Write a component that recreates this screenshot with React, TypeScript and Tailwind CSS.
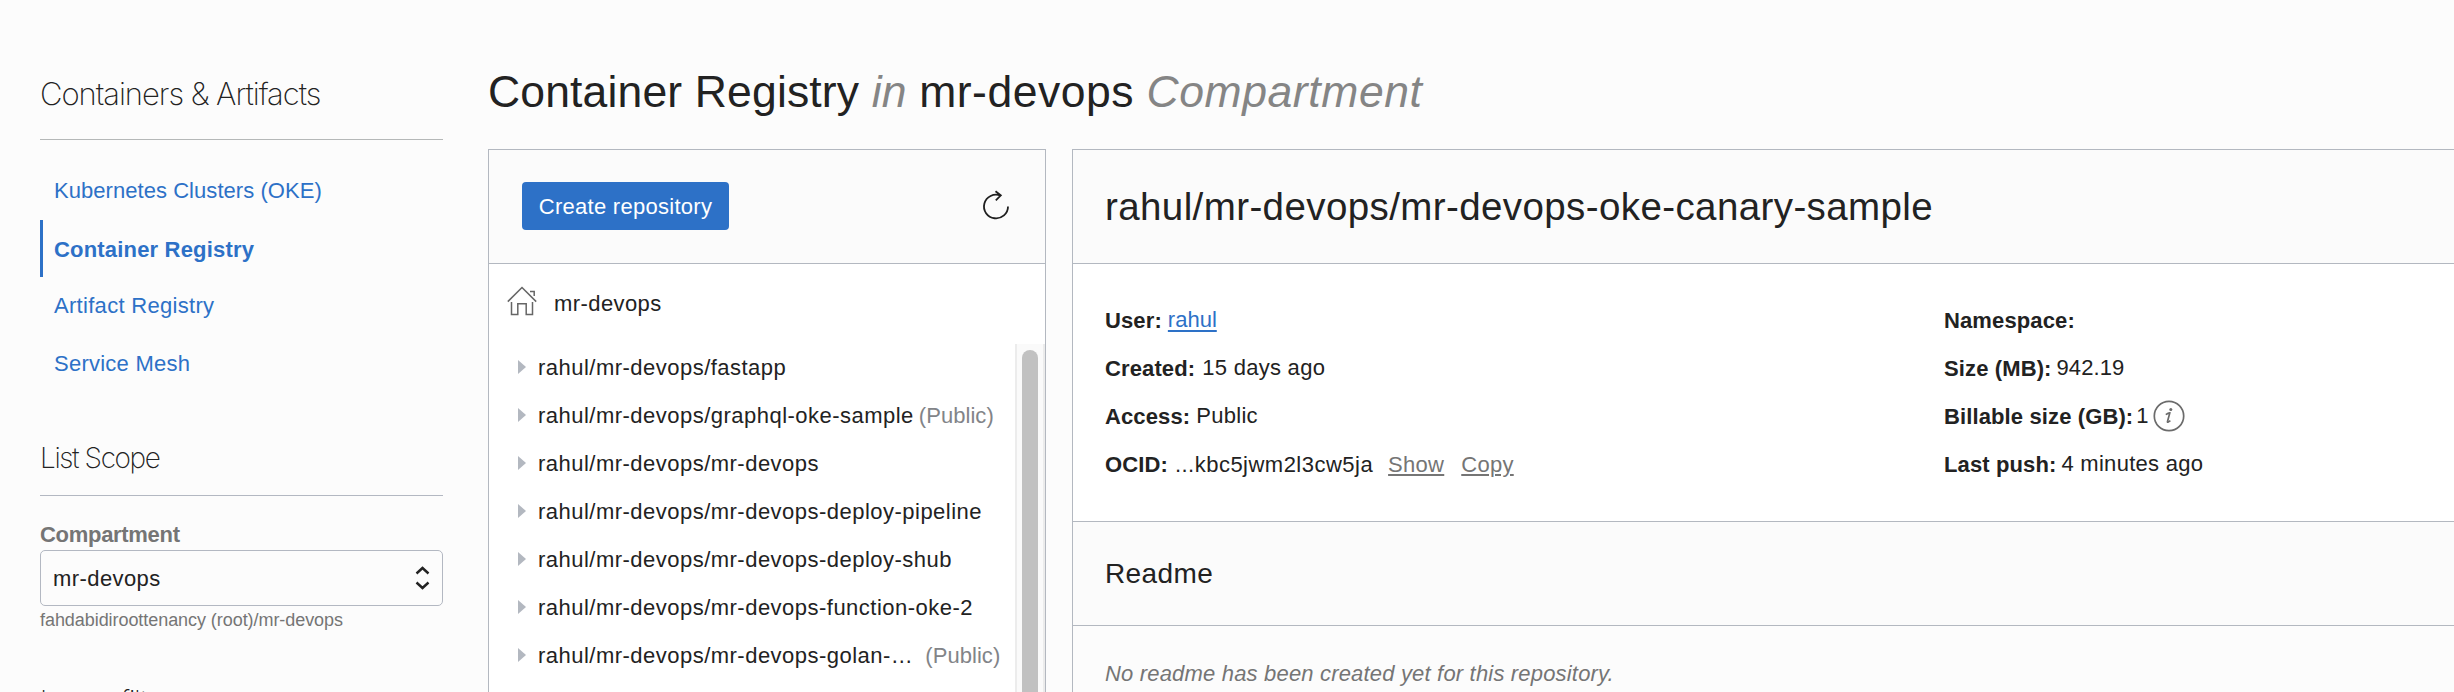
import React from "react";

const repos: { name: string; isPublic?: boolean; cut?: boolean }[] = [
  { name: "rahul/mr-devops/fastapp" },
  { name: "rahul/mr-devops/graphql-oke-sample", isPublic: true },
  { name: "rahul/mr-devops/mr-devops" },
  { name: "rahul/mr-devops/mr-devops-deploy-pipeline" },
  { name: "rahul/mr-devops/mr-devops-deploy-shub" },
  { name: "rahul/mr-devops/mr-devops-function-oke-2" },
  { name: "rahul/mr-devops/mr-devops-golan-…", isPublic: true, cut: true },
];

function Sidebar() {
  return (
    <aside className="ml-10 w-[403px] shrink-0">
      <h2 className="h-[140px] border-b border-[#b5b8b8] pt-[74px] font-['Inter'] text-[31px] leading-[40px] font-extralight tracking-[-1.03px]">
        Containers &amp; Artifacts
      </h2>
      <nav className="flex flex-col pt-[22px] text-[22px] text-[#2d71c7]">
        <a className="h-[58px] pl-[14px] leading-[58px] tracking-[0.05px]">Kubernetes Clusters (OKE)</a>
        <a className="h-[57px] border-l-[3px] border-[#2d71c7] pl-[11px] leading-[60px] font-bold tracking-[0.18px]">Container Registry</a>
        <a className="h-[57px] pl-[14px] leading-[57px] tracking-[0.3px]">Artifact Registry</a>
        <a className="h-[57px] pl-[14px] leading-[60px] tracking-[0.25px]">Service Mesh</a>
      </nav>
      <h3 className="h-[105px] border-b border-[#b3b8c2] pt-[47px] font-['Inter'] text-[28px] leading-[40px] font-extralight tracking-[-1.4px]">
        List Scope
      </h3>
      <div className="pt-[24px] text-[22px] leading-[30px] font-bold tracking-[-0.3px] text-[#757575]">Compartment</div>
      <div className="flex h-[56px] items-center justify-between rounded-[5px] border border-[#b3b8c2] pr-3 pl-[12px] text-[22px] tracking-[0.42px]">
        <span className="pt-px">mr-devops</span>
        <svg width="15" height="24" viewBox="0 0 15 24" fill="none" stroke="#222" strokeWidth="2.4">
          <path d="M1.5 7.500 7.500 2l6 5.500M1.500 16.500 7.500 22l6-5.500" />
        </svg>
      </div>
      <div className="pt-[2px] text-[18px] leading-6 tracking-[-0.06px] text-[#757575]">fahdabidiroottenancy (root)/mr-devops</div>
      <h3 className="mt-[49px] font-['Inter'] text-[28px] leading-[40px] font-extralight tracking-[-1px]">Image filters</h3>
    </aside>
  );
}

function RepoPanel() {
  return (
    <section className="flex w-[558px] shrink-0 flex-col border border-b-0 border-[#b3b8c0] bg-white">
      <div className="flex h-[114px] shrink-0 items-start justify-between border-b border-[#b3b8c0] bg-[#fbfbfb] pt-8 pr-[35px] pl-[33px]">
        <button className="h-12 w-[207px] rounded-[4px] bg-[#2d71c7] text-[22px] tracking-[0.27px] text-white">Create repository</button>
        <svg className="mt-[8px]" width="28" height="30" viewBox="0 0 28 30" fill="none" stroke="#1f1f1f" strokeWidth="1.8">
          <path d="M26 16.500A12 11.800 0 1 1 18.500 5.600M13.500 1.200l5.300 4.200-5 4.900" />
        </svg>
      </div>
      <div className="flex h-[79px] shrink-0 items-center pl-[18px] text-[22px] tracking-[0.42px]">
        <svg className="mb-[5px]" width="30" height="30" viewBox="0 0 30 30" fill="none" stroke="#666" strokeWidth="1.500">
          <path d="M.8 15.600 15 1.500l14.200 14.100M23 5.500h4.200V10M4.500 16v12.500h6.300V17.800h8.400v10.700h6.300V16" />
        </svg>
        <span className="pl-[17px]">mr-devops</span>
      </div>
      <div className="flex min-h-0 flex-1">
        <ul className="w-[526px] text-[22px] tracking-[0.48px]">
          {repos.map((r) => (
            <li key={r.name} className="flex h-12 items-center pl-[29px] whitespace-pre">
              <svg width="8" height="14" viewBox="0 0 8 14" className="mr-3">
                <path d="M0 0 8 7 0 14z" fill="#b3b8c0" />
              </svg>
              <span>{r.name}</span>
              {r.isPublic && (
                <span className={r.cut ? "pl-3 tracking-[0.05px] text-[#828488]" : "pl-[5px] tracking-[0.05px] text-[#828488]"}>(Public)</span>
              )}
            </li>
          ))}
        </ul>
        <div className="mt-px w-[30px] border-x-2 border-[#ececec] bg-[#fafafa] px-[5px] pt-1.5">
          <div className="h-full rounded-t-full bg-[#c1c1c1]" />
        </div>
      </div>
    </section>
  );
}

function Field({ label, children }: { label: string; children?: React.ReactNode }) {
  return (
    <div className="flex h-12 items-center">
      <span className="pr-1.5 font-bold tracking-[0.12px]">{label}</span>
      {children}
    </div>
  );
}

function DetailPanel() {
  return (
    <section className="ml-[26px] flex flex-1 flex-col border-t border-l border-[#b3b8c0]">
      <div className="h-[114px] shrink-0 border-b border-[#b3b8c0] bg-[#fbfbfb] pl-8 text-[38.5px] leading-[114px] tracking-[0.4px]">
        rahul/mr-devops/mr-devops-oke-canary-sample
      </div>
      <div className="flex h-[258px] shrink-0 border-b border-[#b3b8c0] bg-white pt-[32px] pl-8 text-[22px] tracking-[0.28px]">
        <div className="w-[839px] shrink-0">
          <Field label="User:">
            <a className="pb-0.5 tracking-normal text-[#2d71c7] underline decoration-2 underline-offset-3">rahul</a>
          </Field>
          <Field label="Created:">
            <span className="pb-0.5 pl-px">15 days ago</span>
          </Field>
          <Field label="Access:">
            <span className="pb-0.5">Public</span>
          </Field>
          <Field label="OCID:">
            <span className="pl-px tracking-[0.48px]">...kbc5jwm2l3cw5ja</span>
            <a className="ml-[15px] text-[#757575] underline decoration-2 underline-offset-2">Show</a>
            <a className="ml-[17px] text-[#757575] underline decoration-2 underline-offset-2">Copy</a>
          </Field>
        </div>
        <div>
          <Field label="Namespace:" />
          <Field label="Size (MB):">
            <span className="-ml-px pb-0.5 tracking-[0.1px]">942.19</span>
          </Field>
          <Field label="Billable size (GB):">
            <span className="-ml-[3px] pb-0.5">1</span>
            <svg className="mb-px ml-1" width="32" height="32" viewBox="0 0 32 32" fill="none" stroke="#6b6b6b" strokeWidth="1.700">
              <circle cx="16" cy="16" r="14.700" />
              <path d="M12.800 14.600q2.800-1.900 4-1.700l-2.300 8.600q-.4 1.800 2.900-.8" />
              <circle cx="17.800" cy="9.500" r="1.500" fill="#6b6b6b" stroke="none" />
            </svg>
          </Field>
          <Field label="Last push:">
            <span className="-ml-px pb-0.5">4 minutes ago</span>
          </Field>
        </div>
      </div>
      <div className="h-[104px] shrink-0 border-b border-[#b3b8c0] bg-[#fbfbfb] pl-8 text-[28px] leading-[104px] tracking-[0.4px]">Readme</div>
      <div className="pt-[34px] pl-8 text-[22px] leading-[28px] tracking-[0.18px] text-[#757575] italic">
        No readme has been created yet for this repository.
      </div>
    </section>
  );
}

export default function App() {
  return (
    <div className="flex h-[692px] w-[2454px] overflow-hidden bg-[#fcfcfc] font-['Liberation_Sans',sans-serif] text-[#222]">
      <Sidebar />
      <main className="ml-[45px] flex min-w-0 flex-1 flex-col">
        <h1 className="h-[149px] shrink-0 pt-[64px] text-[44.500px] leading-[56px] tracking-[0.15px]">
          Container Registry <em className="text-[#858585]">in</em> <span className="tracking-[0.5px]">mr-devops</span>{" "}
          <em className="tracking-[0.6px] text-[#858585]">Compartment</em>
        </h1>
        <div className="flex min-h-0 flex-1">
          <RepoPanel />
          <DetailPanel />
        </div>
      </main>
    </div>
  );
}
